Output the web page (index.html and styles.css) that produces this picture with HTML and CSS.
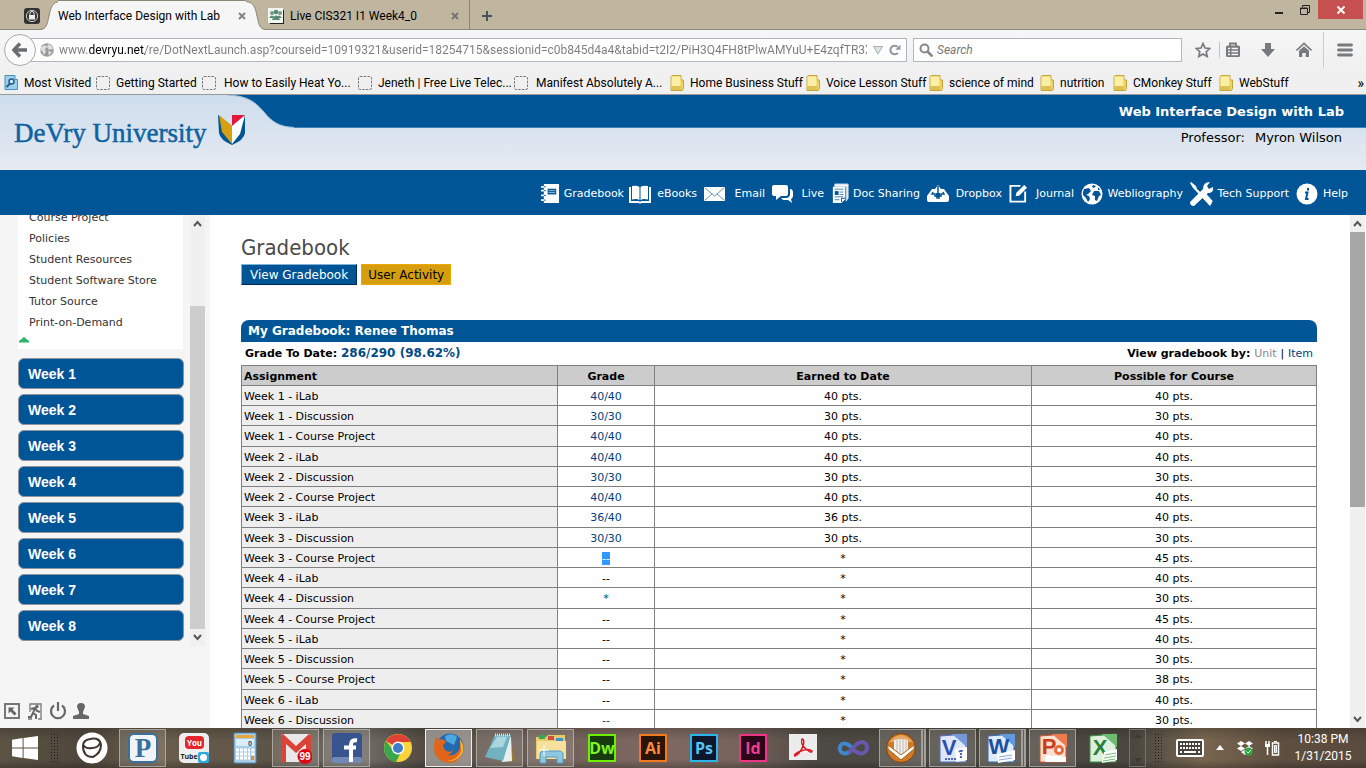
FILE: index.html
```html
<!DOCTYPE html>
<html lang="en">
<head>
<meta charset="utf-8">
<title>Web Interface Design with Lab</title>
<link rel="stylesheet" href="styles.css">
</head>
<body>
<div class="tabbar">
  <svg class="pinned" viewBox="0 0 16 16"><rect width="16" height="16" rx="3" fill="#333"/><circle cx="8" cy="8" r="5.6" fill="none" stroke="#ccc"/><rect x="5" y="7" width="6" height="4.500" fill="#eee"/><path d="M6 7.500V5.500a2 2 0 0 1 4 0v2" fill="none" stroke="#eee"/></svg>
  <div class="tab active">
    <svg class="tab-edge" viewBox="0 0 20 30"><path d="M0 30C7 29 7 24 9 16C11 6 13 2 20 2V30Z" fill="#f6f6f6"/><path d="M0 29.500C7 29 7 24 9 16C11 6 13 2 20 1.500" fill="none" stroke="#8b8675"/></svg>
    <button class="tab-title">Web Interface Design with Lab</button>
    <button class="tab-close" aria-label="Close tab"><svg viewBox="0 0 8 8"><path d="M1 1l6 6M7 1L1 7" stroke="#7d868b" stroke-width="2"/></svg></button>
    <svg class="tab-edge flip" viewBox="0 0 20 30"><path d="M0 30C7 29 7 24 9 16C11 6 13 2 20 2V30Z" fill="#f6f6f6"/><path d="M0 29.500C7 29 7 24 9 16C11 6 13 2 20 1.500" fill="none" stroke="#8b8675"/></svg>
  </div>
  <div class="tab">
    <svg class="favicon" viewBox="0 0 16 16"><path d="M2 16H16V2" fill="none" stroke="#222" stroke-width="2"/><rect width="15" height="15" fill="#f3f5f0"/><circle cx="4" cy="5" r="2" fill="#709b89"/><circle cx="8" cy="4" r="2.300" fill="#568876"/><circle cx="12" cy="5" r="2" fill="#709b89"/><path d="M1 10q3-5 6 0M8 10q3-5 6 0M4 12q4-9 8 0z" fill="#568876"/></svg>
    <button class="tab-title">Live CIS321 I1 Week4_0</button>
    <button class="tab-close" aria-label="Close tab"><svg viewBox="0 0 8 8"><path d="M1 1l6 6M7 1L1 7" stroke="#74766f" stroke-width="2"/></svg></button>
  </div>
  <button class="newtab" aria-label="New tab"><svg viewBox="0 0 10 10"><path d="M5 0v10M0 5h10" stroke="#48545a" stroke-width="2"/></svg></button>
  <div class="wincontrols">
    <button aria-label="Minimize"><svg viewBox="0 0 10 10"><path d="M1 8h8" stroke="#222" stroke-width="2"/></svg></button>
    <button aria-label="Restore"><svg viewBox="0 0 10 10"><path d="M2.500 2V.5h7v7H8" fill="none" stroke="#222"/><path d="M.5 3h7v6.500h-7zM.5 3.500h7" fill="none" stroke="#222"/></svg></button>
    <button class="close" aria-label="Close"><svg viewBox="0 0 10 10"><path d="M1.500 1.500l7 7M8.500 1.500l-7 7" stroke="#fff" stroke-width="1.800"/></svg></button>
  </div>
</div>

<div class="navbar">
  <button class="back" aria-label="Back"><svg viewBox="0 0 16 16"><path d="M8 1.500L1.800 8L8 14.500M2 8H15" fill="none" stroke="#6a6d70" stroke-width="3.400"/></svg></button>
  <div class="urlbox">
    <svg class="i14" viewBox="0 0 14 14"><circle cx="7" cy="7" r="6.800" fill="#999"/><path d="M1 4l4-2 2 2-2 2 1 3-2 3-2-4-2-1zM8 1l4 2 1 4-2-1-2 1-2-3zM8 8l4 1-3 4z" fill="#ddd"/></svg>
    <input class="url" type="text" aria-label="Address" value="www.devryu.net/re/DotNextLaunch.asp?courseid=10919321&amp;userid=18254715&amp;sessionid=c0b845d4a4&amp;tabid=t2I2/PiH3Q4FH8tPlwAMYuU+E4zqfTR3XrU">
    <button aria-label="History"><svg class="i10" viewBox="0 0 10 10"><path d="M.5 1.500h9L5 9z" fill="#dce3e8" stroke="#a5adb5"/></svg></button>
    <button aria-label="Reload"><svg class="i12" viewBox="0 0 12 12"><path d="M9 8.800A4.300 4.300 0 1 1 8.500 2.800" fill="none" stroke="#8e979d" stroke-width="2"/><path d="M11.500 .5v5.300H6.300z" fill="#8e979d"/></svg></button>
  </div>
  <div class="searchbox">
    <svg class="i14" viewBox="0 0 14 14"><circle cx="5.500" cy="5.500" r="4" fill="none" stroke="#888" stroke-width="2"/><path d="M8.500 8.500l5 5" stroke="#888" stroke-width="2.600"/></svg>
    <input class="search" type="text" aria-label="Search" placeholder="Search">
  </div>
  <div class="navicons">
    <button aria-label="Bookmark"><svg class="i16" viewBox="0 0 16 16"><path d="M8 1.500l2 4.500 4.800.5-3.600 3.200 1 4.800L8 12l-4.200 2.500 1-4.800L1.200 6.500 6 6z" fill="none" stroke="#777b7f" stroke-width="1.700"/></svg></button>
    <span class="sep short"></span>
    <button aria-label="Bookmarks list"><svg class="i16" viewBox="0 0 16 16"><path d="M5 4V1.500h6V4" fill="none" stroke="#777b7f" stroke-width="1.800"/><rect x="1" y="3.500" width="14" height="11.500" rx="1.500" fill="#777b7f"/><path d="M3 6.500h2M6.500 6.500H13M3 9.500h2M6.500 9.500H13M3 12.500h2M6.500 12.500H13" stroke="#f5f5f5" stroke-width="1.500"/></svg></button>
    <button aria-label="Downloads"><svg class="i16" viewBox="0 0 16 16"><path d="M5 1h6v6h4l-7 8-7-8h4z" fill="#777b7f"/></svg></button>
    <button aria-label="Home"><svg class="i16" viewBox="0 0 16 16"><path d="M.5 8.500L8 1.500l7.500 7" fill="none" stroke="#777b7f" stroke-width="1.700"/><path d="M3 8.800l5-4.500 5 4.500V15H9.700v-4H6.300v4H3z" fill="#777b7f"/></svg></button>
    <span class="sep"></span>
    <button aria-label="Menu"><svg class="i16" viewBox="0 0 16 16"><path d="M1.500 3h13M1.500 8h13M1.500 13h13" stroke="#777b7f" stroke-width="2.800" stroke-linecap="round"/></svg></button>
  </div>
</div>

<svg class="defs" aria-hidden="true">
  <symbol id="folder" viewBox="0 0 14 16"><path d="M1 1.500L2 .5H11V5H13.500V13.500L12.500 15.500H1z" fill="#ecd267" stroke="#c4a53c"/><path d="M1.500 1.500H10.500V12.500H1.500z" fill="#fbeea5"/><path d="M1.500 11H11V15H1.500z" fill="#dfc055"/></symbol>
  <symbol id="blank" viewBox="0 0 14 14"><rect x=".5" y=".5" width="13" height="13" rx="1.500" fill="none" stroke="#777" stroke-dasharray="2.500 1.200"/></symbol>
</svg>
<nav class="bookmarks">
  <a href="#"><svg viewBox="0 0 14 16"><path d="M1 .5h10v4h2.500v10H1z" fill="#9dd0ec" stroke="#4a90ba"/><circle cx="7.500" cy="6.500" r="2.500" fill="#d8effa" stroke="#215f88" stroke-width="1.500"/><path d="M6 8.500L2.500 12" stroke="#215f88" stroke-width="2"/></svg>Most Visited</a>
  <a href="#"><svg><use href="#blank"/></svg>Getting Started</a>
  <a href="#" class="loose"><svg><use href="#blank"/></svg>How to Easily Heat Yo...</a>
  <a href="#"><svg><use href="#blank"/></svg>Jeneth | Free Live Telec...</a>
  <a href="#" class="loose"><svg><use href="#blank"/></svg>Manifest Absolutely A...</a>
  <a href="#"><svg><use href="#folder"/></svg>Home Business Stuff</a>
  <a href="#"><svg><use href="#folder"/></svg>Voice Lesson Stuff</a>
  <a href="#"><svg><use href="#folder"/></svg>science of mind</a>
  <a href="#"><svg><use href="#folder"/></svg>nutrition</a>
  <a href="#"><svg><use href="#folder"/></svg>CMonkey Stuff</a>
  <a href="#"><svg><use href="#folder"/></svg>WebStuff</a>
  <button class="more" aria-label="More bookmarks">»</button>
</nav>

<header class="site-head">
  <div class="band">
    <svg class="curve" viewBox="0 0 66 33"><path d="M0 0C21 1 28 8 36 17C43 26 51 32 66 32V0Z" fill="#005596"/><path d="M0 0C21 1 28 8 36 17C43 26 51 32 66 32.500" fill="none" stroke="#9fc0dd"/></svg>
    <strong class="course">Web Interface Design with Lab</strong>
  </div>
  <a class="brand" href="#"><span>DeVry University</span>
    <svg viewBox="0 0 28 32"><path d="M0 1L14 12L27 1V19Q26 26 14 31Q2 26 1 19z" fill="#005596"/><path d="M1 1L14 12V30L4 18z" fill="#d6a010"/><path d="M14 11L27 1L22 20L14 30z" fill="#fff"/><path d="M14 1H27L14 12z" fill="#e6173a"/></svg></a>
  <p class="prof"><span>Professor:</span><span>Myron Wilson</span></p>
</header>

<nav class="tools">
  <a href="#"><svg class="t20" viewBox="0 0 20 22"><path d="M3 1h16v20H3z" fill="#fff"/><path d="M0 4h5M0 8h5M0 13h5M0 18h5" stroke="#fff" stroke-width="2"/><path d="M3 4h2M3 8h2M3 13h2M3 18h2" stroke="#005596"/><rect x="7" y="6" width="9" height="6" fill="#005596"/><path d="M8 8h7M8 10h7" stroke="#9bc"/></svg>Gradebook</a>
  <a href="#"><svg class="t22" viewBox="0 0 22 20"><path d="M0 3h2v14h8l1 1 1-1h8V3h2v16H12l-1 1-1-1H0z" fill="#fff"/><path d="M3 2q5-1 7.500 1v13Q8 14.500 3 15.500zM19 2q-5-1-7.500 1v13q2.500-1.500 7.500-.5z" fill="#fff"/></svg>eBooks</a>
  <a href="#"><svg class="t22" viewBox="0 0 22 20"><rect y="3" width="21" height="14" rx="1" fill="#fff"/><path d="M1 4l9.500 8L20 4M1 16l7-6M20 16l-7-6" fill="none" stroke="#6496bd"/></svg>Email</a>
  <a href="#"><svg class="t22" viewBox="0 0 22 20"><path d="M18 5h1q2 1 2 3v4q0 2-2 3l1 4-4-3h-5l-2-2h5q3 0 4-3z" fill="#fff"/><path d="M2 1h12q2 0 2 2v7q0 2-2 2H9l-5 4V12H2q-2 0-2-2V3q0-2 2-2z" fill="#fff"/></svg>Live</a>
  <a href="#"><svg class="t20" viewBox="0 0 18 22"><path d="M3 1h14v15l-2 3V4H3z" fill="#fff" stroke="#b8cedf"/><path d="M1 4h13v13l-4 4H1z" fill="#fff"/><path d="M3 6.500h9M8 9.500h4M8 12h4M3 14.500h9M3 17.500h5" stroke="#4880ad"/><rect x="3" y="8.500" width="4" height="4" fill="#005596"/><path d="M10 20v-4h4" fill="none" stroke="#005596"/></svg>Doc Sharing</a>
  <a href="#"><svg class="t22" viewBox="0 0 22 20"><path d="M5 5h3l3-4 3 4h3l5 7v4q0 2-2 2H2q-2 0-2-2v-4z" fill="#fff"/><path d="M11 2v9M6 8l-1 2h3v2h2v2h2v-2h2v-2h3l-1-2" fill="none" stroke="#005596" stroke-width="1.500"/><path d="M9 9h4v4H9z" fill="#005596"/></svg>Dropbox</a>
  <a href="#"><svg class="t20" viewBox="0 0 20 20"><path d="M12 2H1.500v16.500H17V8" fill="none" stroke="#fff" stroke-width="2"/><path d="M7 13l1-4 8-8 3 3-8 8z" fill="#fff"/></svg>Journal</a>
  <a href="#"><svg class="t22" viewBox="0 0 22 22"><circle cx="11" cy="11" r="10.500" fill="#fff"/><path d="M3 6l5-1 2 3-3 3-2 1 3 1 1 3-2 3-2-4-3-3 0-3zM13 8l5 0 2 4-2 1-2 5-2-1 0-4-3-1zM12 2l3 1-2 2-2-1zM17 4l2 3-2 0z" fill="#005596"/></svg>Webliography</a>
  <a href="#"><svg class="t24" viewBox="0 0 24 24"><path d="M1 0l5 4 1 3 15 14-2 3L5 8 3 6 0 1z" fill="#fff"/><path d="M13 12l8 9" stroke="#fff" stroke-width="5"/><path d="M20 0l-3 4 2 3 4-2q1 6-5 6L4 24Q0 24 0 20L13 7Q13 0 20 0z" fill="#fff"/></svg>Tech Support</a>
  <a href="#"><svg class="t22" viewBox="0 0 22 22"><circle cx="11" cy="11" r="10.500" fill="#fff"/><path d="M12 5v2.500M9 9.500h2.500L10 16h2.500" fill="none" stroke="#005596" stroke-width="2"/></svg>Help</a>
</nav>

<div class="body">
  <aside class="side">
    <div class="side-scroll">
      <div class="side-list">
        <div class="panel">
          <ul>
            <li><a href="#">Course Project</a></li><li><a href="#">Policies</a></li><li><a href="#">Student Resources</a></li><li><a href="#">Student Software Store</a></li><li><a href="#">Tutor Source</a></li><li><a href="#">Print-on-Demand</a></li>
          </ul>
          <svg class="collapse" viewBox="0 0 10 6"><path d="M5 0l5 4v1.500H0V4z" fill="#2fb56b"/></svg>
        </div>
        <button class="week">Week 1</button><button class="week">Week 2</button><button class="week">Week 3</button><button class="week">Week 4</button><button class="week">Week 5</button><button class="week">Week 6</button><button class="week">Week 7</button><button class="week">Week 8</button>
      </div>
      <div class="scrollbar light"><svg viewBox="0 0 15 17"><path d="M4 11l3.500-4 3.500 4" fill="none" stroke="#555" stroke-width="2"/></svg><div class="before"></div><div class="thumb"></div><svg viewBox="0 0 15 17"><path d="M4 6l3.500 4L11 6" fill="none" stroke="#555" stroke-width="2"/></svg></div>
    </div>
    <div class="side-icons">
      <button aria-label="Collapse"><svg viewBox="0 0 18 18"><rect x="2" y="2" width="14" height="14" fill="none" stroke="#777" stroke-width="2"/><path d="M5.500 5.500h6l-2 2 4 4-2 2-4-4-2 2z" fill="#666"/></svg></button>
      <button aria-label="Exit"><svg viewBox="0 0 18 18"><path d="M4 10V2h11v14M2 17h4M12 17h4" fill="none" stroke="#777" stroke-width="1.300"/><circle cx="11" cy="4.500" r="1.700" fill="#666"/><path d="M5 7l4-1 2 3 3 1M9 6l-2 5 3 2v4M7 11l-2 4H2" fill="none" stroke="#666" stroke-width="2"/></svg></button>
      <button aria-label="Log out"><svg viewBox="0 0 18 18"><path d="M5 3.500a7 7 0 1 0 8 0M9 0v9" fill="none" stroke="#666" stroke-width="2.200"/></svg></button>
      <button aria-label="Profile"><svg viewBox="0 0 18 18"><path d="M9 1q4 0 4 4l-2 5v2l6 2v3H1v-3l6-2v-2L5 5q0-4 4-4z" fill="#666"/></svg></button>
    </div>
  </aside>

  <main class="content">
    <h1>Gradebook</h1>
    <div class="views"><button class="view on">View Gradebook</button><button class="view">User Activity</button></div>
    <h2>My Gradebook: Renee Thomas</h2>
    <div class="summary">
      <span>Grade To Date: <b>286/290 (98.62%)</b></span>
      <span>View gradebook by: <i>Unit</i> <em>|</em> <a href="#">Item</a></span>
    </div>
    <table>
      <colgroup><col class="c1"><col class="c2"><col class="c3"><col class="c4"></colgroup>
      <thead><tr><th>Assignment</th><th>Grade</th><th>Earned to Date</th><th>Possible for Course</th></tr></thead>
      <tbody>
        <tr><td>Week 1 - iLab</td><td><a href="#">40/40</a></td><td>40 pts.</td><td>40 pts.</td></tr>
        <tr><td>Week 1 - Discussion</td><td><a href="#">30/30</a></td><td>30 pts.</td><td>30 pts.</td></tr>
        <tr><td>Week 1 - Course Project</td><td><a href="#">40/40</a></td><td>40 pts.</td><td>40 pts.</td></tr>
        <tr><td>Week 2 - iLab</td><td><a href="#">40/40</a></td><td>40 pts.</td><td>40 pts.</td></tr>
        <tr><td>Week 2 - Discussion</td><td><a href="#">30/30</a></td><td>30 pts.</td><td>30 pts.</td></tr>
        <tr><td>Week 2 - Course Project</td><td><a href="#">40/40</a></td><td>40 pts.</td><td>40 pts.</td></tr>
        <tr><td>Week 3 - iLab</td><td><a href="#">36/40</a></td><td>36 pts.</td><td>40 pts.</td></tr>
        <tr><td>Week 3 - Discussion</td><td><a href="#">30/30</a></td><td>30 pts.</td><td>30 pts.</td></tr>
        <tr><td>Week 3 - Course Project</td><td><span class="selected">--</span></td><td>*</td><td>45 pts.</td></tr>
        <tr><td>Week 4 - iLab</td><td>--</td><td>*</td><td>40 pts.</td></tr>
        <tr><td>Week 4 - Discussion</td><td><a href="#">*</a></td><td>*</td><td>30 pts.</td></tr>
        <tr><td>Week 4 - Course Project</td><td>--</td><td>*</td><td>45 pts.</td></tr>
        <tr><td>Week 5 - iLab</td><td>--</td><td>*</td><td>40 pts.</td></tr>
        <tr><td>Week 5 - Discussion</td><td>--</td><td>*</td><td>30 pts.</td></tr>
        <tr><td>Week 5 - Course Project</td><td>--</td><td>*</td><td>38 pts.</td></tr>
        <tr><td>Week 6 - iLab</td><td>--</td><td>*</td><td>40 pts.</td></tr>
        <tr><td>Week 6 - Discussion</td><td><a href="#">--</a></td><td>*</td><td>30 pts.</td></tr>
      </tbody>
    </table>
  </main>
  <div class="scrollbar main-bar"><svg viewBox="0 0 15 17"><path d="M4 11l3.500-4 3.500 4" fill="none" stroke="#555" stroke-width="2"/></svg><div class="thumb"></div><div class="after"></div><svg viewBox="0 0 15 17"><path d="M4 6l3.500 4L11 6" fill="none" stroke="#555" stroke-width="2"/></svg></div>
</div>

<footer class="taskbar">
  <button class="start" aria-label="Start"><svg viewBox="0 0 28 26"><path d="M0 4l11-2v10H0zM12 2l15-2v12H12zM0 13h11v10L0 21zM12 13h15v12l-15-2z" fill="#fff"/></svg></button>
  <span class="grip"></span>
  <div class="apps">
    <button class="app" aria-label="Launcher"><svg viewBox="0 0 32 32"><circle cx="16" cy="16" r="15.500" fill="#fff"/><path d="M7 14Q7 8 14 7Q24 5 25 13Q25 21 17 25Q7 25 7 14zM7 13q3 4 9 3q6 0 8-5" fill="none" stroke="#40352e" stroke-width="2"/></svg></button>
    <button class="app open" aria-label="P app"><svg viewBox="0 0 32 32"><rect x="2" y="2" width="28" height="28" rx="5" fill="#f1f4f6" stroke="#3b6f9e" stroke-width="2"/><text x="16" y="25" class="serif" font-size="27" fill="#3a709f" text-anchor="middle">P</text></svg></button>
    <button class="app" aria-label="YouTube"><svg viewBox="0 0 32 32"><rect x="1" y="1" width="30" height="30" rx="5" fill="#eee"/><rect x="7" y="4" width="19" height="13" rx="4" fill="#e2262b"/><text x="16.500" y="14" class="cond" font-size="8" fill="#fff" text-anchor="middle">You</text><text x="11" y="27" class="cond" font-size="7" fill="#222" text-anchor="middle">Tube</text><rect x="20" y="20" width="11" height="11" rx="2" fill="#31a9e0"/><circle cx="25.500" cy="25.500" r="3.500" fill="#fff"/></svg></button>
    <button class="app" aria-label="Calculator"><svg viewBox="0 0 32 32"><rect x="5" y="1" width="22" height="30" rx="1" fill="#a9cfe8" stroke="#518bb5"/><rect x="7" y="3" width="18" height="3" fill="#e8a53a"/><rect x="7" y="7" width="18" height="7" fill="#d9eefa"/><text x="19" y="13.500" class="cond" font-size="7" fill="#245a80">0</text><path d="M7 18h14M7 22h14M7 26h14" stroke="#fff" stroke-width="3" stroke-dasharray="3 1"/><path d="M24 16.500v8" stroke="#fff" stroke-width="3" stroke-dasharray="3 1"/><rect x="22" y="24" width="3" height="4" fill="#e8892a"/></svg></button>
    <button class="app open" aria-label="Gmail"><svg viewBox="0 0 32 32"><rect x="1" y="2" width="30" height="28" rx="2" fill="#e8e8e8"/><path d="M1 4q0-2 2-2l13 12L29 2q2 0 2 2v26h-5V12l-10 9L6 12v18H1z" fill="#da4336"/><circle cx="25" cy="24.500" r="7.500" fill="#dc0a14"/><text x="25" y="28" class="num" font-size="10" fill="#fff" text-anchor="middle">99</text></svg></button>
    <button class="app open" aria-label="Facebook"><svg viewBox="0 0 32 32"><rect x="1" y="1" width="30" height="30" rx="3" fill="#37548f"/><rect x="1" y="25" width="30" height="6" rx="2" fill="#7389b5"/><path d="M26 8.500q-6-1-6 4v17.500M13 15.500h12" fill="none" stroke="#fff" stroke-width="4"/></svg></button>
    <button class="app" aria-label="Chrome"><svg viewBox="0 0 32 32"><circle cx="16" cy="16" r="14" fill="#fad43a"/><path d="M16 16L4 9A14 14 0 0 1 28.500 10H16z" fill="#df4034"/><path d="M4 9A14 14 0 0 0 14 30l5-10-7-1z" fill="#39a84b"/><circle cx="16" cy="16" r="6.500" fill="#fff"/><circle cx="16" cy="16" r="5" fill="#3f7dc8"/></svg></button>
    <button class="app open current" aria-label="Firefox"><svg viewBox="0 0 32 32"><circle cx="17" cy="15" r="13.500" fill="#2269ad"/><path d="M12 4q8-4 12 1l-3 8-8-4z" fill="#4da8dd"/><path d="M2 7l3-3v4l5-1 3 3-3 3 1 4q5 5 9 1-2 5-6 5 9 2 13-7 1-5-1-9 7 7 3 15-4 9-13 9Q1 29 1 15z" fill="#e2651c"/><path d="M27 7q6 9 1 16-5 7-14 6 11-1 14-10z" fill="#f6b62e"/></svg></button>
    <button class="app open" aria-label="Notes"><svg viewBox="0 0 32 32"><path d="M26 4l5 24-5 3z" fill="#9a793c"/><path d="M11 3l16 2 1 24-10 1z" fill="#e9eff1"/><path d="M11 3h16l-8 26L1 25z" fill="#72b2bf"/><path d="M13 5h10l-4 10-13 1z" fill="#a9d5dc"/><path d="M11 3h16" stroke="#ddd" stroke-width="3" stroke-dasharray="1 1"/></svg></button>
    <button class="app open" aria-label="File Explorer"><svg viewBox="0 0 32 32"><path d="M1 5h10l2-2h17v24H1z" fill="#e6c96e"/><path d="M4 3h6v4H4z" fill="#36a852"/><path d="M13 4h6v4h-6z" fill="#d34e3c"/><path d="M21 6h7v3h-7z" fill="#3e94cf"/><path d="M2 9h29v18H2z" fill="#f5e19b"/><path d="M5 31V22q0-3 4-3h14q5 0 5 3v9h-6v-6H11v6z" fill="#8fc7e3" stroke="#4f9bc4"/><path d="M9 13v11M4 18h10" stroke="#fff"/></svg></button>
    <button class="app" aria-label="Dreamweaver"><svg viewBox="0 0 32 32"><rect x="3" y="3" width="26" height="26" fill="#173b0c" stroke="#6cf000" stroke-width="2"/><text x="16" y="22" class="ad" fill="#7df51d" text-anchor="middle">Dw</text></svg></button>
    <button class="app" aria-label="Illustrator"><svg viewBox="0 0 32 32"><rect x="3" y="3" width="26" height="26" fill="#2b1307" stroke="#f47a20" stroke-width="2"/><text x="16" y="22" class="ad" fill="#f68d3e" text-anchor="middle">Ai</text></svg></button>
    <button class="app" aria-label="Photoshop"><svg viewBox="0 0 32 32"><rect x="3" y="3" width="26" height="26" fill="#0d172d" stroke="#2cb5eb" stroke-width="2"/><text x="16" y="22" class="ad" fill="#55c6f3" text-anchor="middle">Ps</text></svg></button>
  </div>
  <div class="apps tight">
    <button class="app" aria-label="InDesign"><svg viewBox="0 0 32 32"><rect x="3" y="3" width="26" height="26" fill="#2c0617" stroke="#ee3487" stroke-width="2"/><text x="16" y="22" class="ad" fill="#ee3f91" text-anchor="middle">Id</text></svg></button>
    <button class="app" aria-label="Acrobat"><svg viewBox="0 0 32 32"><rect x="2" y="2" width="28" height="26" fill="#ececec"/><path d="M15 7q3 0 1 7-3 8-8 10-2-2 6-5 8-3 11 0 0 3-6-2-6-5-4-10z" fill="none" stroke="#d91820" stroke-width="1.500"/></svg></button>
    <button class="app" aria-label="Infinity app"><svg viewBox="0 0 32 32"><path d="M16 17q-6-7-11-5-4 3-1 8 5 4 12-3" fill="none" stroke="#3d87cb" stroke-width="4"/><path d="M12 21q8-12 14-11 6 3 3 9-5 6-13-2" fill="none" stroke="#6757ad" stroke-width="4"/></svg></button>
    <button class="app open stack" aria-label="Library"><svg viewBox="0 0 32 32"><circle cx="16" cy="16" r="14.500" fill="#cf7a24" stroke="#7d4511"/><path d="M4 10q12-14 24 0" fill="#e4a763"/><path d="M9 8q7-2 14 0v12l-7 5-7-5z" fill="#eee"/><path d="M12 7v14M15 7v16M18 7v16M21 8v12" stroke="#cbb9a8"/><path d="M3 13l13 10 13-10v4L16 28 3 17z" fill="#fff" stroke="#a96627"/></svg></button>
    <button class="app open" aria-label="Visio"><svg viewBox="0 0 32 32"><path d="M3 4l26-2v28H3z" fill="#dde7f8" stroke="#4c70c3"/><path d="M15 2h15v13z" fill="#7797db"/><text x="12" y="23" class="off" fill="#2a4fb0" text-anchor="middle">V</text><path d="M18 17l12-2v13l-11 2z" fill="#fff"/><path d="M8 27h12M24 18v8M22 20l2-2 2 2" fill="none" stroke="#4c66b4" stroke-width="2" stroke-dasharray="2 1"/></svg></button>
    <button class="app open stack" aria-label="Word"><svg viewBox="0 0 32 32"><path d="M3 4l26-2v28H3z" fill="#deebf9" stroke="#2e6bb8"/><path d="M15 2h15v13z" fill="#5f9adc"/><text x="14" y="22" class="off" fill="#1d4f9e" text-anchor="middle">W</text><path d="M12 22l18-4v10l-17 3z" fill="#fff"/><path d="M14 25l13-2M14 28l13-2" stroke="#87a9d5"/></svg></button>
    <button class="app open" aria-label="PowerPoint"><svg viewBox="0 0 32 32"><path d="M3 4l26-2v28H3z" fill="#fbe0d0" stroke="#d2522a"/><path d="M15 2h15v13z" fill="#ee7c4e"/><text x="12" y="22" class="off" fill="#cb3d17" text-anchor="middle">P</text><circle cx="22" cy="18" r="5" fill="#e66a3f"/><circle cx="22" cy="18" r="2" fill="#fff"/><path d="M9 23l20 2v5H8z" fill="#fff"/></svg></button>
    <button class="app" aria-label="Excel"><svg viewBox="0 0 32 32"><path d="M3 4l26-2v28H3z" fill="#dcf0dc" stroke="#3a9548"/><path d="M15 2h15v13z" fill="#6dbc71"/><text x="13" y="23" class="off" fill="#24803a" text-anchor="middle">X</text><path d="M17 20l13-3v11l-15 3z" fill="#fff"/><path d="M18 23l11-2M17 26l12-2M16 29l12-2" stroke="#76b77d"/></svg></button>
  </div>
  <span class="spinner"><svg viewBox="0 0 8 30"><path d="M4 1l4 4H0zM4 29l4-4H0z" fill="#3b3731"/></svg></span>
  <span class="grip"></span>
  <div class="tray">
    <svg class="keys" viewBox="0 0 28 18"><rect x="1" y="1" width="26" height="16" rx="1" fill="#4b443d" stroke="#fff" stroke-width="2"/><path d="M4 5h21M4 9h21" stroke="#fff" stroke-width="2" stroke-dasharray="2 1"/><path d="M4 13h2M8 13h12M22 13h2" stroke="#fff" stroke-width="2"/></svg>
    <svg class="i10" viewBox="0 0 10 10"><path d="M5 2l4 5H1z" fill="#fff"/></svg>
    <svg class="i16" viewBox="0 0 16 16"><path d="M4 1l4 2.500L4 6 0 3.500zM12 1l4 2.500L12 6 8 3.500zM4 6l4 2.500L4 11 0 8.500zM12 6l4 2.500L12 11 8 8.500zM4 12l4-2.500 4 2.500-4 3z" fill="#fff"/><circle cx="11.500" cy="11.500" r="4" fill="#31a843"/><path d="M9.500 11.500l1.500 1.500 3-3" fill="none" stroke="#fff"/></svg>
    <svg class="i16" viewBox="0 0 16 16"><path d="M2 1v3M5 1v3M3.500 7v8" stroke="#fff" stroke-width="1.500"/><path d="M1 4h5v3H1z" fill="#fff"/><rect x="8.500" y="3" width="6" height="12" fill="none" stroke="#fff" stroke-width="1.500"/><path d="M10 1.500h3M10.500 5.500h2v7h-2z" stroke="#fff" fill="#bbb"/></svg>
  </div>
  <time class="clock"><span>10:38 PM</span><span>1/31/2015</span></time>
</footer>
</body>
</html>
```

FILE: styles.css
```css
* { box-sizing: border-box; }
body { margin: 0; height: 100vh; display: flex; flex-direction: column; overflow: hidden; background: #fff; font: 11px/16px "DejaVu Sans", sans-serif; color: #000; }
button { border: 0; padding: 0; background: none; font: inherit; color: inherit; }
a { color: inherit; text-decoration: none; }
svg { display: block; flex: none; }
.defs { position: absolute; width: 0; height: 0; }
.i10 { width: 10px; height: 10px; }
.i12 { width: 12px; height: 12px; }
.i14 { width: 14px; height: 14px; }
.i16 { width: 16px; height: 16px; }

.tabbar, .navbar, .bookmarks, .clock { font-family: Roboto, "Open Sans", sans-serif; font-size: 12px; }
.tabbar { flex: none; height: 30px; display: flex; align-items: center; background: #c0b6a0; box-shadow: inset 0 -1px #8b8675; }
.pinned { width: 16px; height: 16px; margin: 2px 0 0 24px; }
.tab { height: 30px; display: flex; align-items: center; width: 204px; padding: 2px 10px 0 2px; border-right: 1px solid #8b8675; }
.tab-edge { width: 20px; height: 30px; }
.tab.active { width: 226px; padding: 0; border: 0; }
.tab-title { flex: 1; text-align: left; white-space: nowrap; }
.tab.active .tab-title, .tab.active .tab-close { height: 30px; background: #f6f6f6; border-top: 1px solid #8b8675; }
.tab.active .tab-title { padding-top: 1px; margin-left: -2px; }
.tab-close { width: 8px; }
.tab-close svg { width: 8px; height: 8px; }
.flip { transform: scaleX(-1); }
.favicon { width: 16px; height: 16px; margin-right: 6px; }
.newtab { padding: 2px 0 0 12px; }
.newtab svg { width: 10px; height: 10px; }
.wincontrols { margin-left: auto; align-self: flex-start; display: flex; padding-right: 3px; }
.wincontrols button { width: 26px; height: 19px; display: flex; align-items: center; justify-content: center; }
.wincontrols .close { width: 45px; background: #c75050; }
.wincontrols svg { width: 10px; height: 10px; }

.navbar { flex: none; height: 40px; display: flex; align-items: center; background: linear-gradient(#f6f6f6, #f0f0f0); }
.back { flex: none; z-index: 1; width: 32px; height: 32px; margin-left: 4px; border: 1px solid #a9a9a9; border-radius: 50%; background: #fafafa; display: flex; align-items: center; justify-content: center; }
.back svg { width: 16px; height: 16px; }
.urlbox, .searchbox { height: 24px; display: flex; align-items: center; background: #fff; border: 1px solid #b0b8c0; }
.urlbox { flex: 1; margin-left: -5px; padding: 0 5px 0 8px; gap: 6px; }
.searchbox { width: 269px; margin-left: 6px; padding: 0 5px; gap: 4px; }
.url, .search { flex: 1; min-width: 0; border: 0; padding: 0; outline: 0; background: none; font: inherit; line-height: 18px; }
.url { margin-left: -1px; color: transparent; background: linear-gradient(to right, #7b7b7b 30px, #000 30px 86px, #7b7b7b 86px); background-clip: text; -webkit-background-clip: text; }
.search { font-style: italic; }
.search::placeholder { color: #777; opacity: 1; }
.navicons { display: grid; grid-template-columns: 24px 6px 35px 36px 27px 14px 16px; align-items: center; width: 184px; padding-left: 13px; }
.sep { width: 1px; height: 36px; background: #ccc; }
.sep.short { height: 16px; background: #b8c4ce; }

.bookmarks { flex: none; height: 25px; padding: 1px 2px 0 4px; display: grid; grid-template-columns: 92px 106px 156px 156px 156px 136px 123px 111px 73px 106px 1fr auto; align-items: center; background: #f0f0f0; border-bottom: 1px solid #999; white-space: nowrap; }
.bookmarks a { display: flex; align-items: center; gap: 6px; }
.bookmarks .loose { gap: 8px; }
.bookmarks svg { width: 14px; height: 16px; }
.more { font-size: 14px; }

.site-head { flex: none; height: 75px; display: grid; grid-template: 32px 43px / 1fr; background: linear-gradient(#cddded, #e6eaf1); }
.band, .brand, .prof { grid-column: 1; }
.band { grid-row: 1; margin-left: 228px; display: flex; }
.curve { width: 66px; height: 33px; }
.course { flex: 1; height: 33px; padding-right: 22px; background: #005596; color: #fff; text-align: right; font-size: 13px; line-height: 33px; border-bottom: 1px solid #4283b5; }
.brand { grid-row: 1 / 3; justify-self: start; align-self: start; display: flex; align-items: center; gap: 11px; padding: 17px 0 0 14px; font: 27px/32px "Liberation Serif", serif; color: #0f62a0; -webkit-text-stroke: 0.5px #0f62a0; }
.brand span { padding-top: 5px; margin-bottom: -1px; }
.brand svg { width: 28px; height: 32px; }
.prof { grid-row: 2; margin: 3px 24px 0 0; display: flex; justify-content: flex-end; gap: 10px; font-size: 13px; }

.tools { flex: none; height: 45px; padding: 2px 18px 0 0; display: grid; grid-template-columns: 88px 75px 68px 59px 96px 82px 72px 109px 106px 52px; justify-content: end; align-items: center; background: #005596; color: #fff; white-space: nowrap; }
.tools a { display: flex; align-items: center; justify-content: space-between; padding-right: 7px; }
.tools a:first-child { padding-right: 5px; }
.tools a:last-child { padding-right: 0; }
.t20 { width: 19px; height: 21px; }
.t22 { width: 22px; height: 22px; }
.t24 { width: 24px; height: 24px; }

.body { flex: 1; min-height: 0; display: flex; }
.side { flex: none; width: 210px; background: #f5f5f5; display: flex; flex-direction: column; justify-content: space-between; }
.side-scroll { display: flex; justify-content: space-between; padding: 0 5px 0 18px; }
.side-list { width: 166px; }
.panel { width: 165px; height: 134px; margin-bottom: 9px; background: #fff; display: flex; flex-direction: column; justify-content: flex-end; overflow: hidden; }
.panel ul { flex: none; margin: 0; padding: 0 0 0 11px; list-style: none; line-height: 21px; color: #333; }
.collapse { width: 10px; height: 6px; margin: 4px 0 6px 1px; }
.week { display: block; width: 100%; height: 31px; margin-bottom: 5px; padding-left: 9px; border: 1px solid #8f9499; border-radius: 6px; background: #005596; color: #fff; text-align: left; font: bold 14px/16px "Liberation Sans", sans-serif; }
.side-icons { display: flex; gap: 5px; padding: 0 0 8px 3px; }
.side-icons svg { width: 18px; height: 18px; }
.scrollbar { flex: none; width: 15px; display: flex; flex-direction: column; background: #f0f0f0; }
.scrollbar svg { width: 15px; height: 17px; }
.thumb { background: #a6a6a6; flex: 275; }
.after { flex: 204; }
.light .thumb { background: #cdcdcd; flex: 323; }
.before { flex: 74; }
.main-bar { margin-right: 1px; }

.content { flex: 1; min-width: 0; overflow: hidden; padding: 20px 33px 0 31px; }
h1 { margin: 0 0 3px; font: 22px/26px "DejaVu Sans Condensed", "DejaVu Sans", sans-serif; color: #4a4a4a; }
.views { display: flex; gap: 4px; margin-bottom: 35px; font-size: 12px; }
.view { height: 21px; padding: 0 6px; background: #d69d0e; border: 1px solid #eda900; }
.view.on { padding: 0 8px; background: #005596; color: #fff; border-color: #7fb0d5 #00284a #00284a #7fb0d5; }
h2 { margin: 0; padding-left: 7px; background: #005596; color: #fff; border-radius: 8px 8px 0 0; font-size: 12px; line-height: 22px; }
.summary { height: 23px; padding: 0 4px; display: flex; justify-content: space-between; line-height: 23px; font-weight: bold; }
.summary b { color: #004b85; font-size: 12px; }
.summary a, .summary i, .summary em { font-weight: normal; font-style: normal; }
.summary i { color: #888; }
.summary a, td a { color: #003f7d; }
table { width: 100%; table-layout: fixed; border-collapse: collapse; }
.c1 { width: 316px; }
.c2 { width: 97px; }
.c3 { width: 377px; }
th, td { height: 20px; padding: 2px 2px 0; border: 1px solid #808080; text-align: center; }
tbody tr:nth-child(4n+3) td { height: 21px; }
th { background: #ccc; }
th:first-child, td:first-child { text-align: left; }
td:first-child { background: #eee; }
.selected { background: #3399ff; color: #fff; }

.taskbar { flex: none; height: 40px; display: flex; align-items: center; color: #fff; background: linear-gradient(rgba(30,28,20,.25), transparent 30% 80%, rgba(20,20,20,.3)), linear-gradient(to right, #5d5345, #4f473d 6%, #685c4b 12%, #5d5347 20%, #74706b 26%, #534b43 31%, #6d5f57 39%, #7f6862 48%, #77635c 54%, #4d4943 60%, #4b4740 83%, #786650 88%, #5d4e40 94%, #5a4b3e); }
.start { padding-left: 12px; }
.start svg { width: 27px; height: 25px; }
.grip { flex: none; width: 9px; height: 30px; margin-left: 11px; background: radial-gradient(circle, #1d1a17 1px, transparent 1px) 0 0 / 3px 3px; }
.apps { display: flex; gap: 4px; margin-left: 9px; }
.apps.tight { gap: 3px; margin-left: 2px; }
.app { width: 47px; height: 38px; display: flex; align-items: center; justify-content: center; }
.app svg { width: 32px; height: 32px; }
.open { border: 1px solid rgba(225,225,220,.5); background: rgba(210,205,200,.2); }
.current { border-color: #eee; background: rgba(225,225,225,.45); }
.stack { border-right: 5px double rgba(225,225,220,.5); }
.serif { font-family: "Liberation Serif", serif; font-weight: bold; }
.cond { font-family: "Open Sans", sans-serif; font-weight: bold; }
.num { font-family: "Liberation Sans", sans-serif; font-weight: bold; }
.ad { font: bold 16px "Open Sans", sans-serif; }
.off { font: bold 22px "Liberation Sans", sans-serif; }
.spinner { width: 17px; height: 38px; margin-left: 3px; border: 1px solid #77736d; display: flex; align-items: center; justify-content: center; }
.spinner svg { width: 8px; height: 30px; }
.spinner + .grip { margin-left: 8px; }
.tray { flex: 1; display: flex; align-items: center; justify-content: space-between; padding: 0 0 0 13px; }
.keys { width: 28px; height: 18px; }
.clock { width: 86px; text-align: center; }
.clock span { display: block; line-height: 17px; }
```
